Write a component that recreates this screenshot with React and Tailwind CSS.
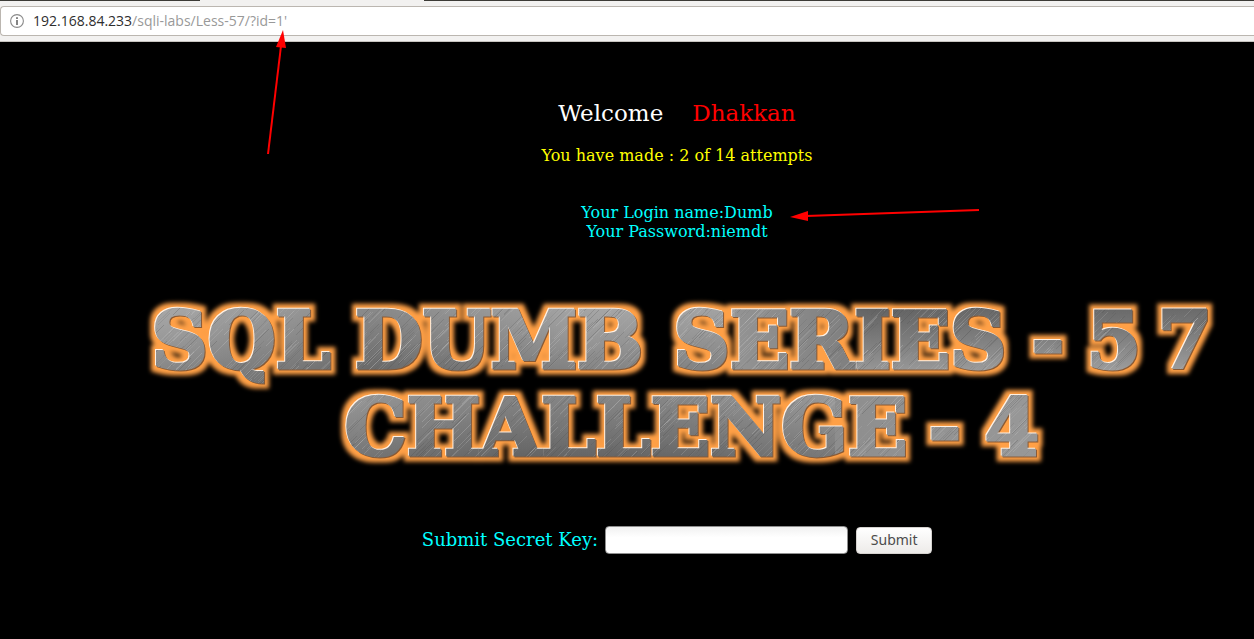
import React from "react";

const LOGO_WIDTH = 1084;
const LOGO_HEIGHT = 168;

const LOGO_WORDS = [
  { text: "SQL", x: 106, y: 68 },
  { text: "DUMB", x: 364, y: 68 },
  { text: "SERIES", x: 705, y: 68 },
  { text: "-", x: 913, y: 68 },
  { text: "5", x: 979, y: 68 },
  { text: "7", x: 1050, y: 68 },
  { text: "CHALLENGE", x: 491, y: 155 },
  { text: "-", x: 810, y: 155 },
  { text: "4", x: 877, y: 155 },
];

// Diagonal scratches for the brushed metal surface.
function buildScratches() {
  let seed = 57;
  const next = () => {
    seed = (seed * 16807) % 2147483647;
    return seed / 2147483647;
  };
  return Array.from({ length: 2400 }, () => {
    const x = Math.round(next() * LOGO_WIDTH);
    const y = Math.round(next() * LOGO_HEIGHT);
    const length = 8 + Math.round(next() * 20);
    return {
      d: `M${x} ${y}l${length} ${-length}`,
      color: next() > 0.45 ? "#d8d8d8" : "#444444",
      opacity: 0.08 + next() * 0.24,
    };
  });
}

const SCRATCHES = buildScratches();

function Logo() {
  return (
    <svg
      viewBox={`0 0 ${LOGO_WIDTH} ${LOGO_HEIGHT}`}
      className="block w-full max-w-[1084px] overflow-visible"
      role="img"
      aria-label="SQL Dumb Series - 57, Challenge - 4"
    >
      <defs>
        <linearGradient id="steelTop" x1="0" y1="0" x2="1" y2="0">
          <stop offset="0" stopColor="#a0a0a0" />
          <stop offset="0.14" stopColor="#8a8a8a" />
          <stop offset="0.22" stopColor="#787878" />
          <stop offset="0.42" stopColor="#9a9a9a" />
          <stop offset="0.54" stopColor="#969696" />
          <stop offset="0.68" stopColor="#7c7c7c" />
          <stop offset="0.8" stopColor="#848484" />
          <stop offset="1" stopColor="#868686" />
        </linearGradient>
        <linearGradient id="steelBottom" x1="0" y1="0" x2="1" y2="0">
          <stop offset="0.2" stopColor="#898989" />
          <stop offset="0.35" stopColor="#747474" />
          <stop offset="0.5" stopColor="#787878" />
          <stop offset="0.65" stopColor="#8e8e8e" />
          <stop offset="0.85" stopColor="#999999" />
        </linearGradient>
        <linearGradient id="shade" x1="0" y1="0" x2="0" y2="1">
          <stop offset="0" stopColor="#ffffff" stopOpacity="0.15" />
          <stop offset="1" stopColor="#000000" stopOpacity="0.2" />
        </linearGradient>
        <linearGradient id="shine" x1="0" y1="0" x2="0" y2="1">
          <stop offset="0" stopColor="#000000" stopOpacity="0.25" />
          <stop offset="1" stopColor="#ffffff" stopOpacity="0.3" />
        </linearGradient>
        <pattern
          id="steel"
          patternUnits="userSpaceOnUse"
          width={LOGO_WIDTH}
          height={LOGO_HEIGHT}
        >
          <rect width={LOGO_WIDTH} height="84" fill="url(#steelTop)" />
          <rect y="84" width={LOGO_WIDTH} height="84" fill="url(#steelBottom)" />
          <rect width="600" height="84" fill="url(#shade)" />
          <rect x="720" width="364" height="84" fill="url(#shine)" />
          <rect y="84" width="700" height="84" fill="url(#shade)" />
          {SCRATCHES.map((line, index) => (
            <path
              key={index}
              d={line.d}
              stroke={line.color}
              strokeOpacity={line.opacity}
              strokeWidth="0.8"
            />
          ))}
        </pattern>
        <filter
          id="glow"
          filterUnits="userSpaceOnUse"
          x="-20"
          y="-20"
          width={LOGO_WIDTH + 40}
          height={LOGO_HEIGHT + 40}
          colorInterpolationFilters="sRGB"
        >
          <feMorphology in="SourceAlpha" operator="dilate" radius="5" result="wide" />
          <feGaussianBlur in="wide" stdDeviation="2" result="soft" />
          <feFlood floodColor="#ffa046" />
          <feComposite in2="soft" operator="in" result="halo" />
          <feOffset in="SourceAlpha" dx="1" dy="1" result="low" />
          <feFlood floodColor="#8a5a34" />
          <feComposite in2="low" operator="in" result="lowEdge" />
          <feOffset in="SourceAlpha" dx="-1" dy="-1" result="high" />
          <feFlood floodColor="#ffffff" floodOpacity="0.85" />
          <feComposite in2="high" operator="in" result="highEdge" />
          <feMerge>
            <feMergeNode in="halo" />
            <feMergeNode in="lowEdge" />
            <feMergeNode in="highEdge" />
            <feMergeNode in="SourceGraphic" />
          </feMerge>
        </filter>
      </defs>
      <g
        filter="url(#glow)"
        fill="url(#steel)"
        stroke="url(#steel)"
        strokeWidth="3"
        strokeLinejoin="miter"
        strokeMiterlimit="2"
        textAnchor="middle"
        fontFamily="'DejaVu Serif', serif"
        fontWeight="700"
        fontSize="78"
      >
        {LOGO_WORDS.map((word) => (
          <text key={`${word.text}-${word.x}`} x={word.x} y={word.y}>
            {word.text}
          </text>
        ))}
      </g>
    </svg>
  );
}

function InfoIcon() {
  return (
    <svg width="14" height="14" viewBox="0 0 14 14" fill="none" aria-hidden="true">
      <circle cx="7" cy="7" r="6.4" stroke="#8a8a8a" strokeWidth="1.1" />
      <rect x="6.1" y="3.2" width="1.8" height="1.8" fill="#777777" />
      <rect x="6.1" y="6" width="1.8" height="5" fill="#777777" />
    </svg>
  );
}

function AddressBar() {
  return (
    <header className="relative bg-[#f2f1f0]">
      <div className="flex h-px">
        <div className="w-[200px] bg-[#3c3b37]" />
        <div className="w-[224px]" />
        <div className="flex-1 bg-[#3c3b37]" />
      </div>
      <div className="border-b border-[#c8c4c0] pt-[5px] pb-[5px]">
        <div className="flex h-[30px] items-center gap-[9px] rounded-l-[4px] border border-r-0 border-[#bbb6b0] bg-white pl-[9px] font-['Open_Sans',sans-serif] text-[14px] leading-5">
          <InfoIcon />
          <a href="#" className="text-[#999999]">
            <span className="text-[#2e2e2e]">192.168.84.233</span>
            /sqli-labs/Less-57/?id=1'
          </a>
        </div>
      </div>
      <svg
        className="pointer-events-none absolute top-[30px] left-[262px]"
        width="28"
        height="126"
        viewBox="0 0 28 126"
        aria-hidden="true"
      >
        <path d="M6 124L19 16" stroke="#ff0000" strokeWidth="2" />
        <path d="M21 0L14 17L24 18Z" fill="#ff0000" />
      </svg>
    </header>
  );
}

export default function App() {
  return (
    <div className="flex min-h-screen flex-col bg-black font-['DejaVu_Serif',serif]">
      <AddressBar />
      <main className="flex flex-col items-center pt-[57px] pb-10 pl-[100px]">
        <h1 className="flex gap-[29px] text-[23px] leading-7 text-white">
          <span>Welcome</span>
          <span className="text-[#ff0000]">Dhakkan</span>
        </h1>
        <p className="mt-[19px] text-base leading-[19px] text-[#ffff00]">
          You have made : 2 of 14 attempts
        </p>
        <div className="relative mt-[38px] text-center text-base leading-[19px] text-[#00ffff]">
          <p>Your Login name:Dumb</p>
          <p>Your Password:niemdt</p>
          <svg
            className="pointer-events-none absolute top-[4px] left-full ml-[17px]"
            width="190"
            height="16"
            viewBox="0 0 190 16"
            aria-hidden="true"
          >
            <path d="M16 9L189 3" stroke="#ff0000" strokeWidth="2" />
            <path d="M0 10L18 4V14Z" fill="#ff0000" />
          </svg>
        </div>
        <div className="mt-[59px] flex w-full justify-center">
          <Logo />
        </div>
        <form
          className="mt-[58px] flex items-center"
          onSubmit={(event) => event.preventDefault()}
        >
          <label htmlFor="key" className="text-[18px] leading-6 text-[#00ffff]">
            Submit Secret Key:
          </label>
          <input
            id="key"
            type="text"
            className="ml-[7px] h-[28px] w-[243px] rounded-[4px] border border-[#8f8f8f] bg-linear-to-b from-[#f1f1f1] to-white to-40% px-2 text-[15px] text-[#333333]"
          />
          <button
            type="submit"
            className="ml-[8px] h-[27px] w-[76px] rounded-[4px] border border-[#d5d2cf] bg-linear-to-b from-white to-[#edebe9] font-['Noto_Sans',sans-serif] text-[14px] leading-5 text-[#4c4c4c]"
          >
            Submit
          </button>
        </form>
      </main>
    </div>
  );
}
